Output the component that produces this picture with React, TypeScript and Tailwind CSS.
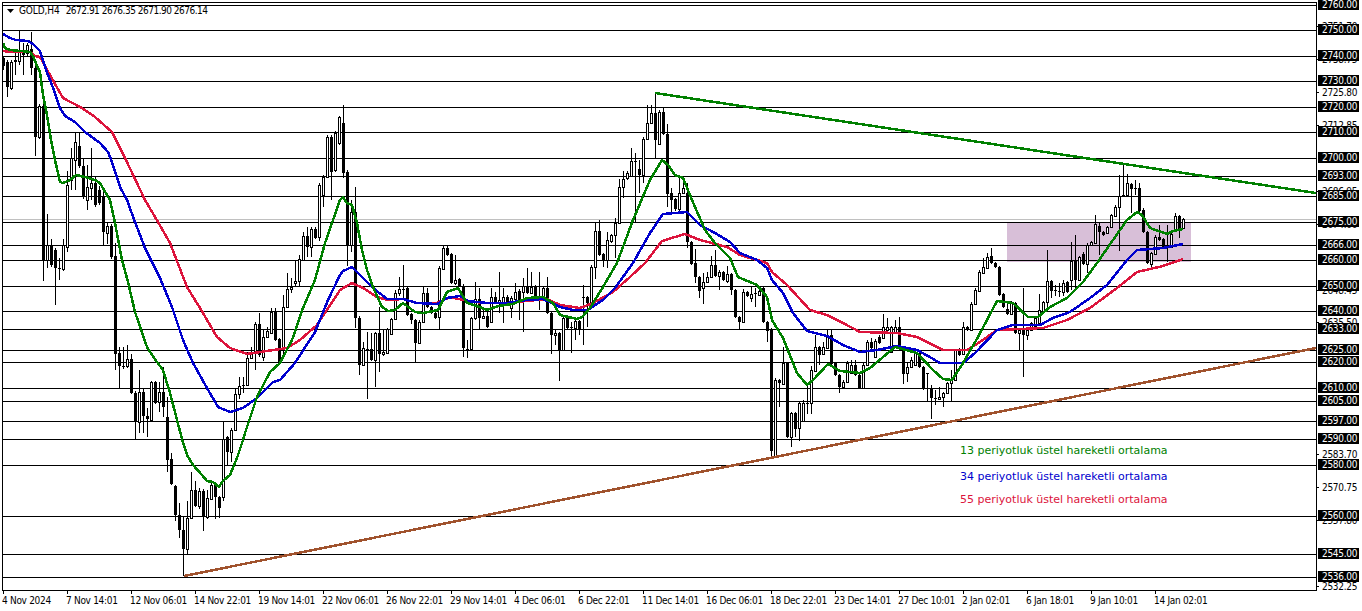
// MT4-style GOLD H4 chart. Everything below is traced in page pixels.
type Candle = [number, number, number, number, number];

const candles: Candle[] = [
  [58,66,56,70,0],[62,87,60,97,0],[62,88,60,90,1],[60,62,50,75,0],[50,61,31,65,1],[52,55,43,75,0],[45,53,43,57,1],[49,68,32,75,0],
  [68,137,60,156,0],[106,137,104,139,1],[106,260,104,281,0],[245,260,214,268,1],[245,265,239,267,0],[250,268,248,305,0],[268,269,258,280,0],[245,269,239,271,1],
  [185,247,171,252,1],[158,180,148,190,1],[142,160,133,190,1],[146,166,133,168,0],[166,197,159,199,0],[187,200,165,210,1],[183,188,148,200,1],[183,205,177,207,0],
  [190,203,186,205,0],[197,232,190,245,0],[226,233,223,244,1],[226,257,224,259,0],[256,354,243,370,0],[353,366,347,388,0],[366,367,347,369,0],[359,366,345,368,1],
  [359,393,354,394,0],[393,422,391,439,0],[392,422,370,433,1],[392,416,388,433,0],[416,419,408,437,0],[382,420,381,422,1],[382,403,381,404,0],[392,402,382,412,1],
  [392,407,367,417,0],[417,460,397,472,0],[459,484,453,485,0],[486,515,485,521,0],[515,530,503,538,0],[530,549,517,576,0],[518,549,501,554,1],[490,518,472,519,1],
  [490,506,481,507,0],[491,506,488,509,1],[491,517,489,531,0],[498,517,490,519,1],[485,499,481,500,1],[485,497,484,519,0],[497,508,496,518,0],[439,497,421,501,1],
  [437,452,436,465,0],[430,452,428,462,1],[394,430,388,431,1],[386,394,377,399,1],[385,386,377,393,0],[358,385,352,386,1],[352,358,347,359,1],[324,352,322,370,1],
  [324,355,313,357,0],[337,357,330,361,1],[331,337,327,338,1],[312,333,308,334,1],[312,340,308,341,0],[339,362,338,363,0],[307,350,295,357,1],[289,307,273,308,1],
  [287,289,278,293,1],[281,283,260,286,1],[259,281,255,286,1],[236,260,232,261,1],[236,247,227,257,0],[229,247,227,257,1],[229,238,227,239,0],[185,237,183,241,1],
  [177,195,175,207,1],[137,177,135,178,1],[137,172,135,200,0],[133,170,131,172,1],[117,143,116,145,1],[123,173,105,178,0],[172,245,170,266,0],[212,245,200,252,1],
  [212,318,187,328,0],[318,365,316,375,0],[348,365,342,366,1],[349,350,332,399,0],[349,360,333,361,0],[333,360,332,387,1],[333,354,307,372,0],[352,354,330,356,1],
  [329,353,328,354,1],[319,334,318,335,1],[293,319,290,320,1],[289,293,277,296,1],[289,290,265,300,0],[288,315,287,316,0],[314,320,313,324,0],[320,343,319,362,0],
  [322,343,320,344,1],[293,322,287,323,1],[293,307,288,308,0],[307,313,306,314,0],[313,318,312,319,0],[268,317,266,329,1],[248,269,245,270,1],[248,255,246,256,0],
  [254,283,253,284,0],[280,283,255,285,1],[279,286,278,287,0],[286,348,284,357,0],[349,350,340,358,0],[318,349,317,350,1],[299,318,282,320,1],[299,318,288,329,0],
  [316,318,310,319,1],[316,327,310,328,0],[297,322,288,323,1],[297,302,292,303,0],[300,303,272,313,1],[297,302,288,323,1],[297,302,295,303,0],[298,308,296,318,1],
  [292,299,283,300,1],[291,302,289,320,0],[286,292,278,332,1],[286,293,268,294,0],[287,293,272,294,1],[287,297,285,298,0],[296,297,272,310,1],[288,297,286,298,1],
  [288,313,277,314,0],[313,335,312,354,0],[333,335,330,345,1],[333,350,332,381,0],[318,350,316,351,1],[318,328,317,329,0],[327,328,322,353,0],[321,328,320,340,1],
  [321,330,320,335,0],[297,298,285,345,0],[297,303,296,327,0],[267,303,265,304,1],[231,267,223,279,1],[231,255,220,256,0],[254,260,253,267,0],[240,260,232,268,1],
  [235,241,234,243,1],[223,235,218,258,1],[187,223,179,224,1],[179,187,171,198,1],[173,178,171,180,1],[161,176,148,177,1],[161,162,153,222,0],[169,175,160,193,0],
  [139,175,137,183,1],[123,139,105,140,1],[113,123,105,124,1],[113,140,93,159,0],[112,144,110,145,1],[112,134,107,135,0],[134,194,124,207,0],[193,200,188,212,0],
  [199,209,198,211,0],[193,209,178,211,1],[188,193,178,194,1],[193,242,183,248,0],[242,264,241,265,0],[263,277,249,283,0],[277,291,276,298,0],[282,288,273,304,1],
  [277,282,272,283,1],[265,277,256,278,1],[265,276,250,277,0],[272,276,270,290,1],[272,280,271,281,0],[274,281,266,283,1],[274,290,273,295,0],[290,317,289,318,0],
  [317,322,316,330,0],[292,322,289,323,1],[292,296,291,297,0],[294,298,287,302,1],[293,294,288,307,0],[291,295,287,296,1],[288,322,287,323,0],[322,331,321,342,0],
  [329,451,328,457,0],[380,456,378,457,1],[380,383,379,407,0],[363,384,347,385,1],[363,437,362,438,0],[413,437,412,447,1],[413,429,412,437,0],[403,428,402,441,1],
  [403,421,400,422,1],[403,404,385,414,0],[370,403,366,414,1],[347,371,335,372,1],[347,355,346,365,0],[347,354,342,355,1],[335,348,329,349,1],[335,364,329,365,0],
  [363,375,362,376,0],[375,387,374,393,0],[382,387,380,389,1],[363,382,361,383,1],[365,373,360,374,1],[365,375,360,376,0],[375,388,374,389,0],[365,388,363,389,1],
  [342,365,340,366,1],[342,348,338,349,0],[341,357,339,358,1],[337,343,335,344,0],[327,338,314,339,1],[327,330,318,331,1],[327,352,326,353,1],[327,333,320,334,1],
  [327,347,317,348,0],[350,374,348,384,0],[367,373,362,382,1],[360,367,357,368,1],[353,365,350,366,1],[353,367,352,368,0],[367,389,366,390,0],[373,374,373,401,0],
  [388,398,385,419,0],[398,399,390,405,0],[397,399,387,400,1],[393,397,392,407,1],[383,393,382,394,1],[380,383,370,401,1],[350,380,349,381,1],[349,355,348,356,0],
  [327,354,322,355,1],[327,330,326,331,0],[304,330,302,331,1],[290,304,288,305,1],[272,291,270,292,1],[267,273,258,274,1],[257,268,253,269,1],[256,263,248,264,0],
  [263,267,262,268,0],[267,295,266,296,0],[294,307,293,308,0],[309,314,302,315,0],[302,314,301,315,1],[303,333,302,334,0],[330,333,329,350,1],[328,335,288,377,0],
  [330,335,329,340,1],[323,330,322,331,1],[318,326,317,327,1],[310,323,294,324,1],[302,312,301,313,1],[281,302,250,310,1],[281,291,280,298,0],[290,291,285,296,0],
  [291,292,283,297,0],[283,292,280,296,1],[282,292,281,293,0],[261,280,242,290,1],[261,280,235,290,0],[257,280,256,281,1],[254,264,252,265,0],[245,264,243,273,1],
  [242,245,241,246,1],[224,243,215,244,1],[226,232,222,255,0],[232,235,231,236,0],[227,233,226,234,1],[215,227,214,228,1],[207,216,205,217,1],[196,207,175,251,1],
  [195,196,165,197,1],[183,195,174,196,1],[184,189,183,213,0],[188,189,180,195,0],[188,211,183,212,0],[210,232,208,233,0],[232,263,231,264,0],[253,264,252,268,1],
  [237,254,235,255,1],[237,240,225,241,0],[239,247,238,248,0],[246,247,225,262,0],[234,247,233,248,1],[216,230,213,231,1],[216,229,215,238,0],[219,228,218,229,1],
];

const ema13 =
  "3,43 5,48 10,50 20,51 30,52 33,56 37,66 40,72 43,95 47,115 51,140 55,160 60,182 63,183 70,180 76,175 85,177 95,180 100,183 107,195 110,200 115,223 122,260 128,282 135,312 147,347 157,362 163,370 170,393 182,439 187,455 193,465 202,475 207,481 213,482 219,487 223,481 230,475 237,458 243,440 245,433 257,397 270,372 280,363 292,340 303,308 315,280 325,243 340,200 343,197 347,203 352,205 357,223 362,250 367,270 373,287 382,307 388,311 395,310 403,303 415,312 423,313 438,310 447,292 458,288 467,303 477,306 487,310 498,306 513,304 527,298 543,297 553,303 560,315 577,319 582,317 590,308 603,287 617,263 633,220 650,180 662,160 668,165 675,175 683,178 692,200 705,230 715,243 730,258 738,277 757,285 767,297 772,320 783,338 797,373 807,385 813,380 828,364 840,371 860,373 870,368 895,347 917,353 933,370 943,379 952,380 963,363 978,337 997,301 1013,303 1028,317 1038,317 1050,307 1067,298 1083,282 1097,263 1113,240 1127,220 1137,212 1142,215 1150,228 1167,234 1173,231 1183,229";
const ema34 =
  "3,34 10,38 16,40 28,41 33,44 40,51 46,70 52,85 60,108 65,116 75,122 85,132 100,143 108,152 112,162 120,187 127,200 135,222 145,248 160,278 172,307 183,340 193,363 207,388 218,407 230,412 243,408 257,398 273,382 280,380 295,363 315,332 328,300 340,275 343,271 352,267 360,275 373,288 387,299 403,299 417,303 437,304 447,298 460,296 468,301 487,303 507,303 527,300 543,299 560,307 573,310 588,310 603,300 615,288 633,263 650,233 663,214 687,212 700,225 715,233 730,242 740,253 757,260 767,268 772,280 783,293 793,313 807,331 827,336 843,345 860,352 877,350 897,346 917,350 928,356 940,363 963,363 975,353 997,330 1013,325 1040,325 1053,318 1070,312 1090,298 1107,285 1127,260 1137,250 1163,248 1183,244";
const ema55 =
  "3,51 10,52 30,52 35,56 40,57 50,75 63,98 80,107 95,117 112,132 125,158 145,200 158,222 170,243 187,287 200,308 217,337 230,348 247,354 267,351 287,348 300,340 317,325 340,290 352,283 363,288 377,297 388,300 403,299 417,303 437,303 450,297 463,300 483,303 507,303 547,299 560,305 580,308 593,303 613,292 630,277 645,263 662,241 685,234 700,240 727,247 740,255 767,263 772,272 787,285 810,310 827,315 843,323 860,332 897,333 917,337 943,350 967,350 980,342 997,330 1043,328 1067,320 1090,308 1117,288 1137,272 1163,266 1183,259";

const levels: [string, number][] = [
  ["2760.00", 5],["2750.00", 30],["2740.00", 56],["2730.00", 81],["2720.00", 107],["2710.00", 132],["2700.00", 158],
  ["2693.00", 176],["2685.00", 196],["2675.00", 222],["2666.00", 245],["2660.00", 260],["2650.00", 286],["2640.00", 311],
  ["2633.00", 329],["2625.00", 350],["2620.00", 362],["2610.00", 388],["2605.00", 401],["2597.00", 421],["2590.00", 439],
  ["2580.00", 465],["2560.00", 516],["2545.00", 554],["2536.00", 577],
];

// regular scale marks; those still showing peek out from under the black level boxes
const scale: [string, number][] = [
  ["2751.70", 27],["2738.75", 60],["2725.80", 93],["2712.85", 126],["2686.95", 192],["2674.00", 225],
  ["2648.45", 291],["2635.50", 323],["2583.70", 455],["2570.75", 488],["2557.80", 521],["2532.25", 587],
];

const times = [
  "4 Nov 2024","7 Nov 14:01","12 Nov 06:01","14 Nov 22:01","19 Nov 14:01","22 Nov 06:01","26 Nov 22:01","29 Nov 14:01",
  "4 Dec 06:01","6 Dec 22:01","11 Dec 14:01","16 Dec 06:01","18 Dec 22:01","23 Dec 14:01","27 Dec 10:01","2 Jan 02:01",
  "6 Jan 18:01","9 Jan 10:01","14 Jan 02:01",
];

const legend = [
  { top: "top-[442px]", color: "text-[#008000]", label: "13 periyotluk üstel hareketli ortalama" },
  { top: "top-[468px]", color: "text-[#0000cd]", label: "34 periyotluk üstel hareketli ortalama" },
  { top: "top-[491px]", color: "text-[#dc143c]", label: "55 periyotluk üstel hareketli ortalama" },
];

function Chart() {
  return (
    <svg width={1313} height={587} viewBox="3 3 1313 587" className="block">
      <rect x={1007} y={222} width={184} height={40} fill="#d8bfd8" />
      <line x1={3} x2={1316} y1={219.5} y2={219.5} stroke="#c0c0c0" />
      {levels.map(([label, y]) => (
        <line key={label} x1={3} x2={1316} y1={y + 0.5} y2={y + 0.5} stroke="#000" />
      ))}
      <g shapeRendering="crispEdges">
        {candles.map(([top, bottom, high, low, bull], i) => {
          const c = 3 + 4 * i;
          return (
            <g key={i}>
              <line x1={c + 0.5} x2={c + 0.5} y1={high} y2={low} stroke="#000" />
              {bull ? (
                <rect x={c - 0.5} y={top + 0.5} width={2} height={bottom - top} fill="#fff" stroke="#000" />
              ) : (
                <rect x={c - 1} y={top} width={3} height={bottom - top} fill="#000" />
              )}
            </g>
          );
        })}
      </g>
      <g fill="none" strokeWidth={2.5} strokeLinejoin="round" shapeRendering="crispEdges">
        <polyline points={ema55} stroke="#dc143c" />
        <polyline points={ema34} stroke="#0000cd" />
        <polyline points={ema13} stroke="#008000" />
        <line x1={655} y1={93} x2={1316} y2={193} stroke="#008000" />
        <line x1={184} y1={576} x2={1316} y2={348} stroke="#a0522d" />
      </g>
    </svg>
  );
}

export default function App() {
  return (
    <div className="w-[1362px] h-[611px] bg-white overflow-hidden flex flex-col text-[10px] leading-[11px] tracking-[-0.3px] text-black font-['DejaVu_Sans_Condensed','DejaVu_Sans',sans-serif]">
      <div className="flex pl-[2px] pt-[2px] h-[591px]">
        {/* Plot */}
        <div className="relative w-[1315px] h-[589px] border border-black shrink-0">
          <Chart />
          <div className="absolute left-[4px] top-[2px] flex items-center gap-[5px] whitespace-pre">
            <svg width={7} height={4} viewBox="0 0 7 4">
              <path d="M0 0H7L3.5 4Z" fill="#000" />
            </svg>
            <span className="tracking-[-0.1px] mr-[1px]">GOLD,H4</span>
            <span className="tracking-[-0.5px]">2672.91 2676.35 2671.90 2676.14</span>
          </div>
          {legend.map((item) => (
            <span
              key={item.label}
              className={`absolute left-[957px] whitespace-nowrap text-[11px] tracking-normal font-['DejaVu_Sans',sans-serif] ${item.top} ${item.color}`}
            >
              {item.label}
            </span>
          ))}
        </div>
        {/* Price scale */}
        <div className="relative flex-1 -mt-[2px]">
          {scale.map(([label, y]) => (
            <div key={label} className="absolute left-0 flex items-center h-[11px]" style={{ top: y - 6 }}>
              <span className="w-[2px] h-px bg-black mr-[3px]" />
              <span>{label}</span>
            </div>
          ))}
          {levels.map(([label, y]) => (
            <div
              key={label}
              className="absolute left-[1px] w-[41px] h-[11px] bg-black text-white pl-[4px]"
              style={{ top: y - 6 }}
            >
              {label}
            </div>
          ))}
        </div>
      </div>
      {/* Time scale */}
      <div className="flex pl-[3px]">
        {times.map((label) => (
          <div key={label} className="w-[64px] shrink-0 whitespace-nowrap">
            <div className="w-px h-[3px] bg-black" />
            <div className="mt-[1px] -ml-[1px]">{label}</div>
          </div>
        ))}
      </div>
    </div>
  );
}
